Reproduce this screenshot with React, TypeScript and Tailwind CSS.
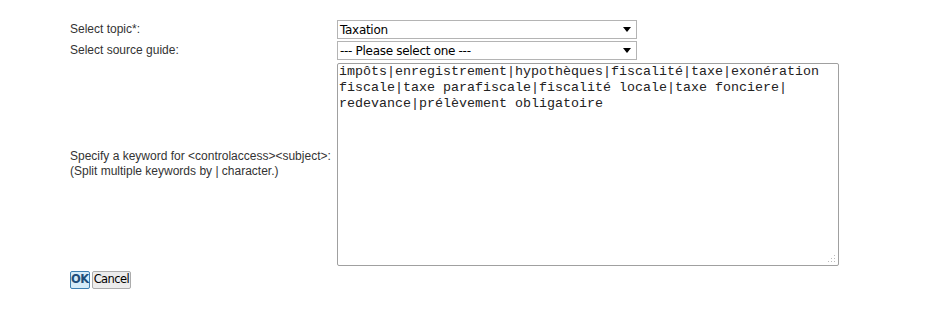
const KEYWORDS = [
  "impôts",
  "enregistrement",
  "hypothèques",
  "fiscalité",
  "taxe",
  "exonération fiscale",
  "taxe parafiscale",
  "fiscalité locale",
  "taxe fonciere",
  "redevance",
  "prélèvement obligatoire",
].join("|\u200B");

function Arrow() {
  return (
    <svg width="8" height="5" viewBox="0 0 8 5" aria-hidden="true">
      <path d="M0 0h8L4 5z" fill="#000" />
    </svg>
  );
}

function FakeSelect({ value }: { value: string }) {
  return (
    <div className="flex h-[19px] w-[300px] items-center justify-between border border-[#b4b4b4] bg-white pl-[2px] pr-[5px] text-[12px] leading-none text-black [font-family:'DejaVu_Sans',Verdana,sans-serif]">
      <span className="tracking-[-0.3px]">{value}</span>
      <Arrow />
    </div>
  );
}

function Grip() {
  return (
    <svg
      width="8"
      height="8"
      viewBox="0 0 8 8"
      className="absolute bottom-[2px] right-[2px]"
      aria-hidden="true"
    >
      <rect x="6" y="0" width="1" height="1" fill="#bbb" />
      <rect x="3" y="3" width="1" height="1" fill="#bbb" />
      <rect x="6" y="3" width="1" height="1" fill="#bbb" />
      <rect x="0" y="6" width="1" height="1" fill="#bbb" />
      <rect x="3" y="6" width="1" height="1" fill="#bbb" />
      <rect x="6" y="6" width="1" height="1" fill="#bbb" />
    </svg>
  );
}

export default function App() {
  return (
    <div className="min-h-[324px] w-[951px] bg-white pl-[70px] pt-[20px] text-[12px] text-[#333] [font-family:'Liberation_Sans',Arial,sans-serif]">
      <div className="grid grid-cols-[267px_auto] items-center gap-y-[2px]">
        <span className="leading-[19px]">Select topic*:</span>
        <FakeSelect value="Taxation" />

        <span className="leading-[19px]">Select source guide:</span>
        <FakeSelect value="--- Please select one ---" />

        <div className="leading-[15px]">
          Specify a keyword for &lt;controlaccess&gt;&lt;subject&gt;:
          <br />
          (Split multiple keywords by | character.)
        </div>
        <div className="relative mt-[1px] h-[203px] w-[502px] rounded-[2px] border border-[#a0a0a0] bg-white">
          <p className="px-[1px] pr-[16px] text-[13.33px] leading-[16px] text-[#222] [font-family:'Liberation_Mono','Courier_New',monospace]">
            {KEYWORDS}
          </p>
          <Grip />
        </div>
      </div>

      <div className="mt-[5px] flex gap-[2px] [font-family:'DejaVu_Sans',Verdana,sans-serif]">
        <button className="h-[18px] rounded-[2px] border border-[#3c7fb1] bg-[#d5ecf9] px-0 text-[11.5px] font-bold leading-none text-[#1f4f7a] tracking-[-0.5px]">
          OK
        </button>
        <button className="h-[18px] rounded-[2px] border border-[#acacac] bg-[#ececec] px-[1px] text-[11.5px] leading-none text-black tracking-[-0.6px]">
          Cancel
        </button>
      </div>
    </div>
  );
}
